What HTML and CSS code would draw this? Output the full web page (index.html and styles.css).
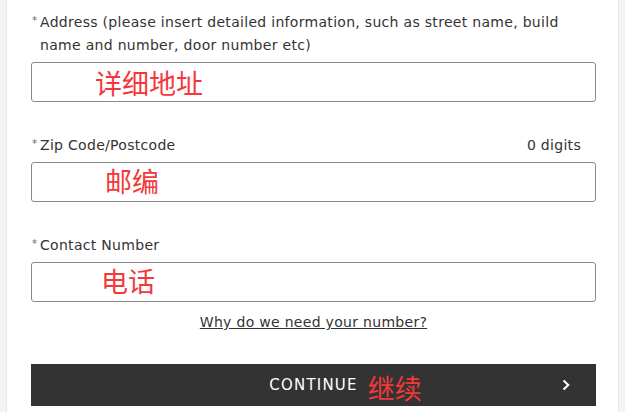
FILE: index.html
```html
<!DOCTYPE html>
<html lang="en">
<head>
<meta charset="utf-8">
<title>Address form</title>
<link rel="stylesheet" href="styles.css">
</head>
<body>
<div class="page">
  <div class="panel">
    <div class="field">
      <div class="label">
        <span class="req">*</span>
        <span class="label-text">Address (please insert detailed information, such as street name, build name and number, door number etc)</span>
      </div>
      <div class="input"><span class="value v-address">详细地址</span></div>
    </div>
    <div class="field">
      <div class="label">
        <span class="req">*</span>
        <span class="label-text">Zip Code/Postcode</span>
        <span class="counter">0 digits</span>
      </div>
      <div class="input"><span class="value v-zip">邮编</span></div>
    </div>
    <div class="field field-last">
      <div class="label">
        <span class="req">*</span>
        <span class="label-text">Contact Number</span>
      </div>
      <div class="input"><span class="value v-phone">电话</span></div>
    </div>
    <div class="why"><a class="why-link" href="#">Why do we need your number?</a></div>
    <div class="btn">
      <span class="btn-side"></span>
      <span class="btn-label">CONTINUE</span>
      <span class="btn-side btn-right">
        <span class="btn-note">继续</span>
        <svg class="chev" width="8" height="12" viewBox="0 0 8 12"><polyline points="1.5,1.5 6.3,6 1.5,10.5" fill="none" stroke="#fff" stroke-width="2"/></svg>
      </span>
    </div>
  </div>
</div>
</body>
</html>
```
FILE: styles.css
```css
html, body {
  margin: 0;
  padding: 0;
}
body {
  background: #f4f4f4;
  font-family: "DejaVu Sans", sans-serif;
  color: #333;
}
.page {
  padding: 0 6px;
  height: 412px;
  overflow: hidden;
}
.panel {
  background: #fff;
  border-left: 1px solid #e8e8e8;
  border-right: 1px solid #e8e8e8;
  padding: 11px 22px 20px 24px;
  min-height: 412px;
  box-sizing: border-box;
}
.field {
  margin-bottom: 32px;
}
.field-last {
  margin-bottom: 0;
}
.label {
  display: flex;
  font-size: 14px;
  line-height: 23px;
  letter-spacing: 0.3px;
  color: #333;
  padding-right: 15px;
  margin-bottom: 5px;
  padding-top: 1px;
  margin-top: -1px;
}
.req {
  flex: none;
  width: 9px;
  font-size: 10px;
  line-height: 20px;
  color: #666;
  padding-left: 1px;
  box-sizing: border-box;
}
.label-text {
  flex: 1;
}
.counter {
  flex: none;
}
.input {
  height: 40px;
  border: 1px solid #8a8a8a;
  border-radius: 3px;
  box-sizing: border-box;
  display: flex;
  align-items: center;
}
.value {
  font-family: "Noto Sans CJK SC", sans-serif;
  font-size: 27px;
  line-height: 1;
  color: #f2383b;
}
.v-address {
  padding-left: 63px;
  margin-top: 1px;
}
.v-zip {
  padding-left: 73px;
  margin-bottom: 4px;
}
.v-phone {
  padding-left: 69px;
  margin-bottom: 4px;
}
.why {
  margin-top: 10px;
  text-align: center;
  font-size: 14px;
  line-height: 20px;
  letter-spacing: 0.3px;
}
.why-link {
  color: #333;
  text-decoration: underline;
}
.btn {
  margin-top: 32px;
  height: 42px;
  background: #333;
  color: #fff;
  display: grid;
  grid-template-columns: 1fr auto 1fr;
  align-items: center;
}
.btn-label {
  font-size: 15px;
  letter-spacing: 1.2px;
}
.btn-right {
  display: flex;
  align-items: center;
  justify-content: space-between;
  padding-left: 10px;
  padding-right: 26px;
}
.btn-note {
  font-family: "Noto Sans CJK SC", sans-serif;
  font-size: 27px;
  line-height: 1;
  color: #f2383b;
  margin-top: 4px;
}
.chev {
  display: block;
}
```
